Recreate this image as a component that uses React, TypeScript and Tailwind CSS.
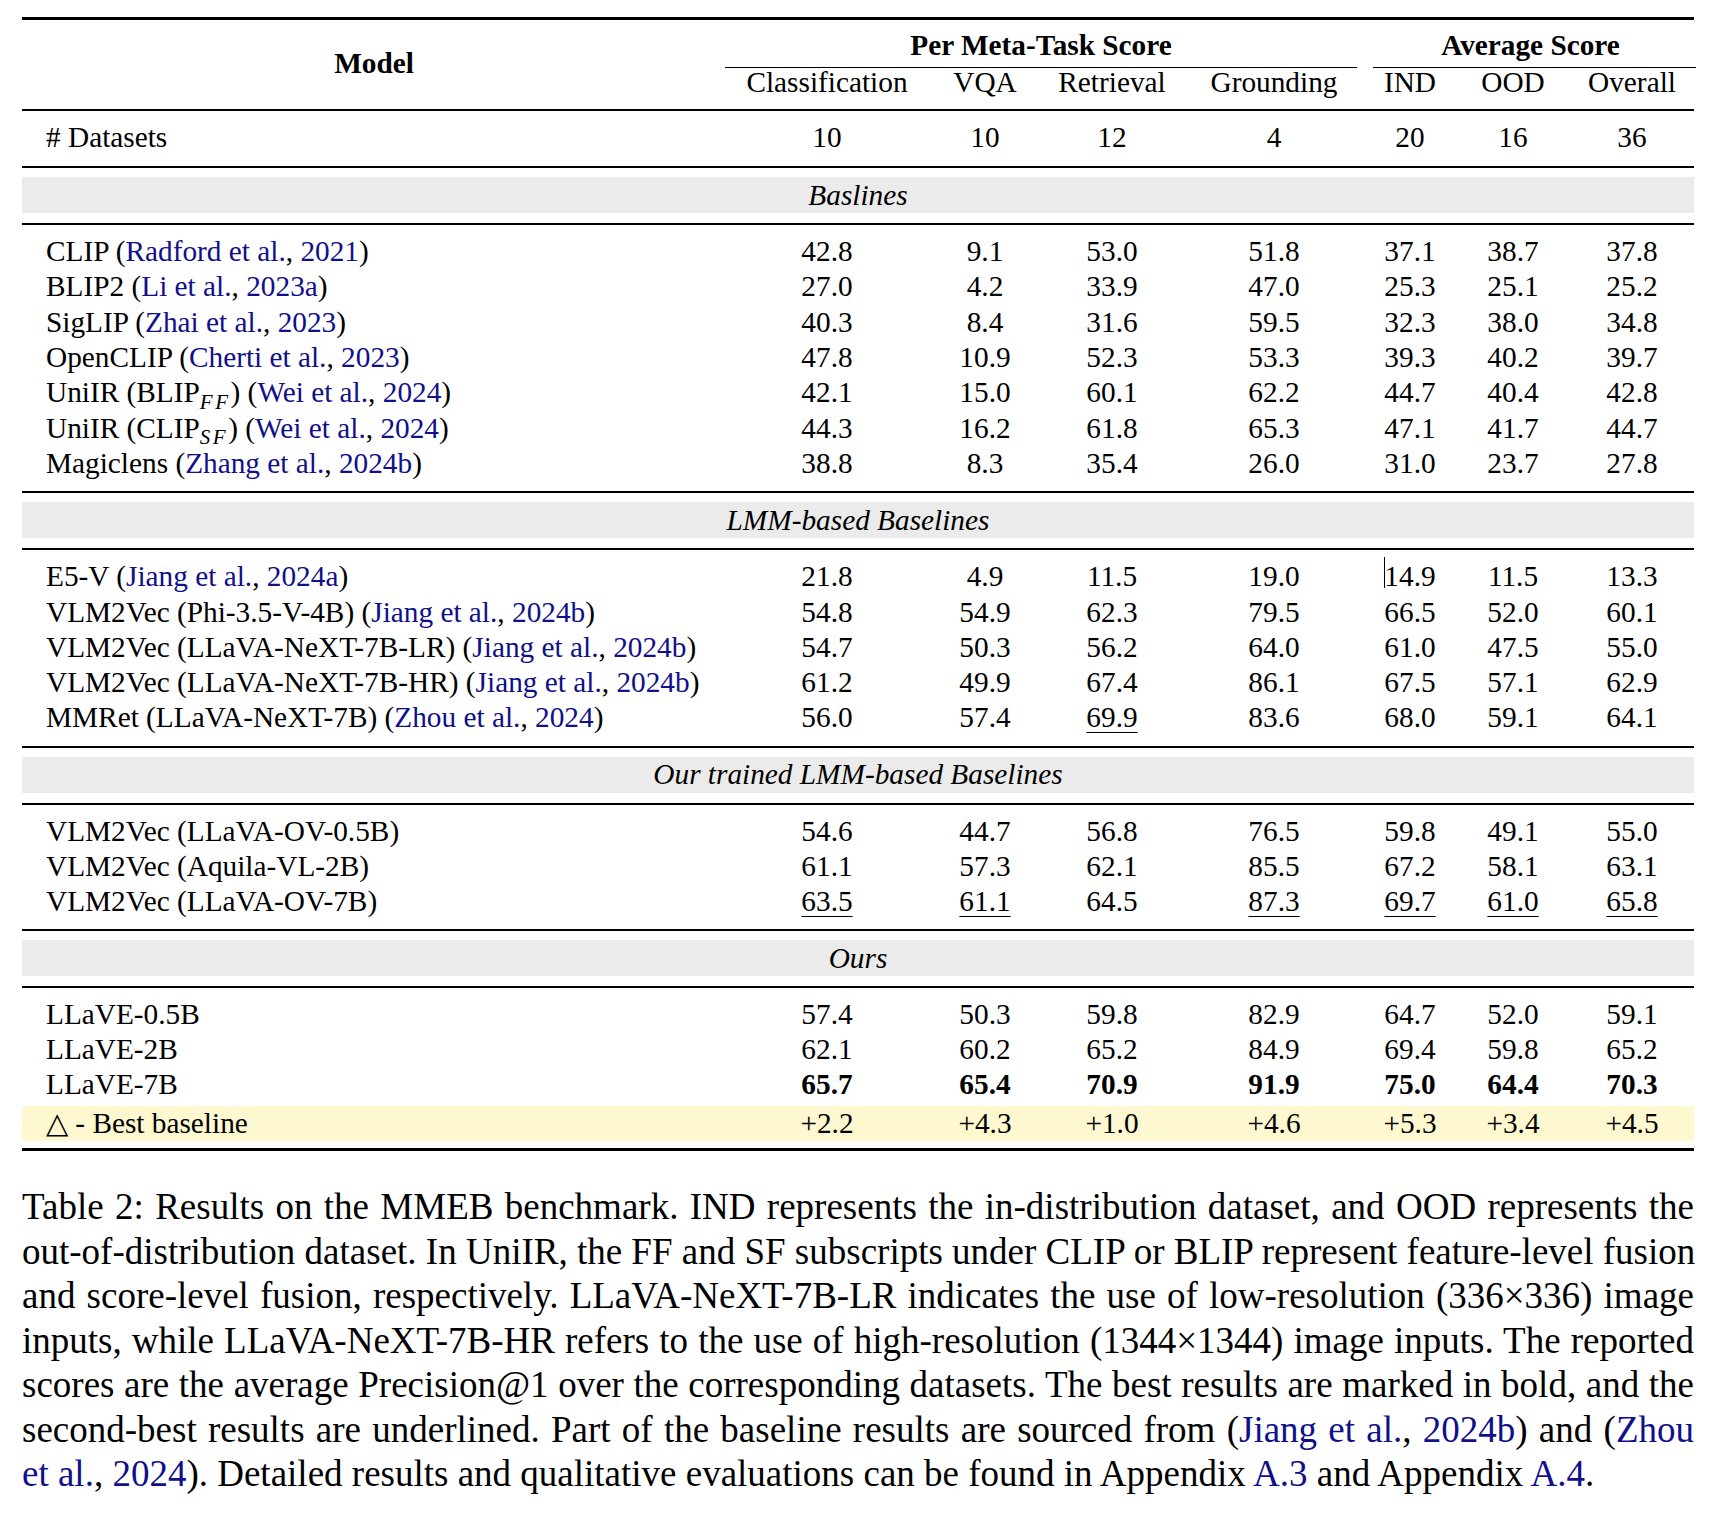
import React from 'react';

const cols = 'grid grid-cols-[695px_220px_96px_158px_166px_106px_100px_135px]';

const Cite: React.FC<{ a: string; y: string }> = ({ a, y }) => (
	<>
		(<span className="text-[#10108a]">{a}</span>, <span className="text-[#10108a]">{y}</span>)
	</>
);

type RowProps = {
	name: React.ReactNode;
	values: string[];
	under?: number[];
	bold?: boolean;
	className?: string;
};

const Row: React.FC<RowProps> = ({ name, values, under = [], bold, className = '' }) => (
	<div className={`${cols} h-[35.3px] items-center ${className}`}>
		<div className="pl-[24px] whitespace-nowrap">{name}</div>
		{values.map((v, i) => (
			<div key={i} className={`flex justify-center whitespace-nowrap ${i === 6 ? 'pl-[3px]' : ''}`}>
				<span
					className={`${under.includes(i) ? 'underline underline-offset-[5px] decoration-1' : ''} ${
						bold ? 'font-bold' : ''
					}`}
				>
					{v}
				</span>
			</div>
		))}
	</div>
);

const Band: React.FC<{ title: string }> = ({ title }) => (
	<>
		<div className="mt-[9px] h-[36px] bg-[#ebebeb] flex items-center justify-center italic">
			{title}
		</div>
		<div className="mt-[10px] h-[2px] bg-black" />
	</>
);

const Sub: React.FC<{ t: string }> = ({ t }) => (
	<sub className="italic text-[21px] tracking-[0.12em] -bottom-[0.3em]">{t}</sub>
);

const Link: React.FC<{ children: React.ReactNode }> = ({ children }) => (
	<span className="text-[#10108a]">{children}</span>
);

const App: React.FC = () => {
	return (
		<div className="w-[1716px] h-[1518px] bg-white text-black font-['Liberation_Serif',serif]">
			<div className="mx-[22px] pt-[17px] text-[29.3px] leading-[35px]">
				<div className="h-[3px] bg-black" />
				{/* header */}
				<div className={`${cols} pt-[8px] pb-[13px]`}>
					<div className="row-span-3 flex items-center justify-center font-bold pl-[9px] pt-[2px]">
						Model
					</div>
					<div className="col-span-4 h-[35px] flex items-center justify-center font-bold pl-[8px]">
						Per Meta-Task Score
					</div>
					<div className="col-span-3 h-[35px] flex items-center justify-center font-bold pl-[6px]">
						Average Score
					</div>
					<div className="col-span-4 mt-[4px] ml-[8px] h-[1px] bg-black" />
					<div className="col-span-3 mt-[4px] ml-[16px] mr-[2px] h-[1px] bg-black" />
					{['Classification', 'VQA', 'Retrieval', 'Grounding', 'IND', 'OOD', 'Overall'].map((h, i) => (
						<div
							key={h}
							className={`h-[28px] flex items-center justify-center whitespace-nowrap ${i === 6 ? 'pl-[3px]' : ''}`}
						>
							{h}
						</div>
					))}
				</div>
				<div className="h-[2px] bg-black" />
				<div className="pt-[9px] pb-[11px]">
					<Row name="# Datasets" values={['10', '10', '12', '4', '20', '16', '36']} className="!h-[35px]" />
				</div>
				<div className="h-[2px] bg-black" />

				<Band title="Baslines" />
				<div className="pt-[9px] pb-[10px]">
					<Row name={<>CLIP <Cite a="Radford et al." y="2021" /></>} values={['42.8', '9.1', '53.0', '51.8', '37.1', '38.7', '37.8']} />
					<Row name={<>BLIP2 <Cite a="Li et al." y="2023a" /></>} values={['27.0', '4.2', '33.9', '47.0', '25.3', '25.1', '25.2']} />
					<Row name={<>SigLIP <Cite a="Zhai et al." y="2023" /></>} values={['40.3', '8.4', '31.6', '59.5', '32.3', '38.0', '34.8']} />
					<Row name={<>OpenCLIP <Cite a="Cherti et al." y="2023" /></>} values={['47.8', '10.9', '52.3', '53.3', '39.3', '40.2', '39.7']} />
					<Row name={<>UniIR (BLIP<Sub t="FF" />) <Cite a="Wei et al." y="2024" /></>} values={['42.1', '15.0', '60.1', '62.2', '44.7', '40.4', '42.8']} />
					<Row name={<>UniIR (CLIP<Sub t="SF" />) <Cite a="Wei et al." y="2024" /></>} values={['44.3', '16.2', '61.8', '65.3', '47.1', '41.7', '44.7']} />
					<Row name={<>Magiclens <Cite a="Zhang et al." y="2024b" /></>} values={['38.8', '8.3', '35.4', '26.0', '31.0', '23.7', '27.8']} />
				</div>
				<div className="h-[2px] bg-black" />

				<Band title="LMM-based Baselines" />
				<div className="pt-[9px] pb-[10px]">
					<div className={`${cols} h-[35.3px] items-center`}>
						<div className="pl-[24px] whitespace-nowrap">
							E5-V <Cite a="Jiang et al." y="2024a" />
						</div>
						{['21.8', '4.9', '11.5', '19.0'].map((v) => (
							<div key={v} className="flex justify-center">{v}</div>
						))}
						<div className="flex justify-center">
							<span className="relative">
								<span className="absolute left-0 -top-[2px] h-[31px] w-[1px] bg-black" />
								14.9
							</span>
						</div>
						<div className="flex justify-center">11.5</div>
						<div className="flex justify-center pl-[3px]">13.3</div>
					</div>
					<Row name={<>VLM2Vec (Phi-3.5-V-4B) <Cite a="Jiang et al." y="2024b" /></>} values={['54.8', '54.9', '62.3', '79.5', '66.5', '52.0', '60.1']} />
					<Row name={<>VLM2Vec (LLaVA-NeXT-7B-LR) <Cite a="Jiang et al." y="2024b" /></>} values={['54.7', '50.3', '56.2', '64.0', '61.0', '47.5', '55.0']} />
					<Row name={<>VLM2Vec (LLaVA-NeXT-7B-HR) <Cite a="Jiang et al." y="2024b" /></>} values={['61.2', '49.9', '67.4', '86.1', '67.5', '57.1', '62.9']} />
					<Row name={<>MMRet (LLaVA-NeXT-7B) <Cite a="Zhou et al." y="2024" /></>} values={['56.0', '57.4', '69.9', '83.6', '68.0', '59.1', '64.1']} under={[2]} />
				</div>
				<div className="h-[2px] bg-black" />

				<Band title="Our trained LMM-based Baselines" />
				<div className="pt-[9px] pb-[10px]">
					<Row name="VLM2Vec (LLaVA-OV-0.5B)" values={['54.6', '44.7', '56.8', '76.5', '59.8', '49.1', '55.0']} />
					<Row name="VLM2Vec (Aquila-VL-2B)" values={['61.1', '57.3', '62.1', '85.5', '67.2', '58.1', '63.1']} />
					<Row name="VLM2Vec (LLaVA-OV-7B)" values={['63.5', '61.1', '64.5', '87.3', '69.7', '61.0', '65.8']} under={[0, 1, 3, 4, 5, 6]} />
				</div>
				<div className="h-[2px] bg-black" />

				<Band title="Ours" />
				<div className="pt-[8px]">
					<Row name="LLaVE-0.5B" values={['57.4', '50.3', '59.8', '82.9', '64.7', '52.0', '59.1']} />
					<Row name="LLaVE-2B" values={['62.1', '60.2', '65.2', '84.9', '69.4', '59.8', '65.2']} />
					<Row name="LLaVE-7B" values={['65.7', '65.4', '70.9', '91.9', '75.0', '64.4', '70.3']} bold />
				</div>
				<div className="mt-[4px] bg-[#fdf8cf] pb-[5px]">
					<Row
						name="△ - Best baseline"
						values={['+2.2', '+4.3', '+1.0', '+4.6', '+5.3', '+3.4', '+4.5']}
						className="!h-[30px]"
					/>
				</div>
				<div className="mt-[7px] h-[3px] bg-black" />
			</div>

			{/* caption */}
			<div className="mx-[22px] mt-[34px] text-[37px] leading-[44.5px]">
				<div className="whitespace-nowrap text-justify [text-align-last:justify]">
					Table 2: Results on the MMEB benchmark. IND represents the in-distribution dataset, and OOD represents the
				</div>
				<div className="whitespace-nowrap text-justify [text-align-last:justify]">
					out-of-distribution dataset. In UniIR, the FF and SF subscripts under CLIP or BLIP represent feature-level fusion
				</div>
				<div className="whitespace-nowrap text-justify [text-align-last:justify]">
					and score-level fusion, respectively. LLaVA-NeXT-7B-LR indicates the use of low-resolution (336×336) image
				</div>
				<div className="whitespace-nowrap text-justify [text-align-last:justify]">
					inputs, while LLaVA-NeXT-7B-HR refers to the use of high-resolution (1344×1344) image inputs. The reported
				</div>
				<div className="whitespace-nowrap text-justify [text-align-last:justify]">
					scores are the average Precision@1 over the corresponding datasets. The best results are marked in bold, and the
				</div>
				<div className="whitespace-nowrap text-justify [text-align-last:justify]">
					second-best results are underlined. Part of the baseline results are sourced from (<Link>Jiang et al.</Link>,{' '}
					<Link>2024b</Link>) and (<Link>Zhou</Link>
				</div>
				<div className="whitespace-nowrap">
					<Link>et al.</Link>, <Link>2024</Link>). Detailed results and qualitative evaluations can be found in Appendix{' '}
					<Link>A.3</Link> and Appendix <Link>A.4</Link>.
				</div>
			</div>
		</div>
	);
};

export default App;
